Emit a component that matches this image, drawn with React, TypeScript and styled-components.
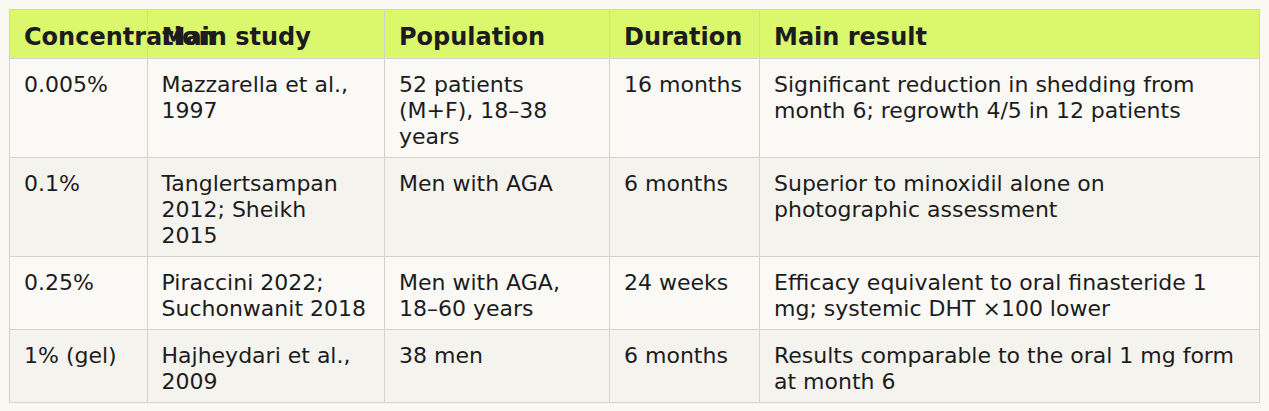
import { createGlobalStyle, styled } from 'styled-components';

const GlobalStyle = createGlobalStyle`
  html, body {
    margin: 0;
    padding: 0;
    background: #f9f8f3;
  }
`;

type Study = {
  concentration: string;
  study: string;
  population: string;
  duration: string;
  result: string;
};

const STUDIES: Study[] = [
  {
    concentration: '0.005%',
    study: 'Mazzarella et al., 1997',
    population: '52 patients (M+F), 18–38 years',
    duration: '16 months',
    result: 'Significant reduction in shedding from month 6; regrowth 4/5 in 12 patients',
  },
  {
    concentration: '0.1%',
    study: 'Tanglertsampan 2012; Sheikh 2015',
    population: 'Men with AGA',
    duration: '6 months',
    result: 'Superior to minoxidil alone on photographic assessment',
  },
  {
    concentration: '0.25%',
    study: 'Piraccini 2022; Suchonwanit 2018',
    population: 'Men with AGA, 18–60 years',
    duration: '24 weeks',
    result: 'Efficacy equivalent to oral finasteride 1 mg; systemic DHT ×100 lower',
  },
  {
    concentration: '1% (gel)',
    study: 'Hajheydari et al., 2009',
    population: '38 men',
    duration: '6 months',
    result: 'Results comparable to the oral 1 mg form at month 6',
  },
];

const COLUMNS = ['11%', '19%', '18%', '12%', '40%'];

const App = () => {
  return (
    <Page>
      <GlobalStyle />
      <Table>
        <colgroup>
          {COLUMNS.map((width, index) => (
            <col key={index} style={{ width }} />
          ))}
        </colgroup>
        <thead>
          <tr>
            <HeadCell>Concentration</HeadCell>
            <HeadCell>Main study</HeadCell>
            <HeadCell>Population</HeadCell>
            <HeadCell>Duration</HeadCell>
            <HeadCell>Main result</HeadCell>
          </tr>
        </thead>
        <tbody>
          {STUDIES.map((row, index) => (
            <Row key={row.concentration} $striped={index % 2 === 1}>
              <Cell>{row.concentration}</Cell>
              <Cell>{row.study}</Cell>
              <Cell>{row.population}</Cell>
              <Cell>{row.duration}</Cell>
              <Cell>{row.result}</Cell>
            </Row>
          ))}
        </tbody>
      </Table>
    </Page>
  );
};

export default App;

const Page = styled.div`
  padding: 9px;
`;

const Table = styled.table`
  width: 100%;
  table-layout: fixed;
  border-collapse: collapse;

  font-family: 'DejaVu Sans', sans-serif;
  font-size: 22px;
  line-height: 26px;
  color: #1c1c1c;
`;

const HeadCell = styled.th`
  padding: 13px 17px 7px 14px;

  background: #dbf76b;
  border: 1px solid #d4d2cb;

  font-size: 24px;
  line-height: 28px;
  font-weight: 700;
  text-align: left;
  white-space: nowrap;
  overflow: visible;
`;

const Row = styled.tr<{ $striped: boolean }>`
  background: ${({ $striped }) => ($striped ? '#f4f3ee' : '#faf9f6')};
`;

const Cell = styled.td`
  padding: 13px 17px 7px 14px;

  border: 1px solid #d4d2cb;

  vertical-align: top;
`;
